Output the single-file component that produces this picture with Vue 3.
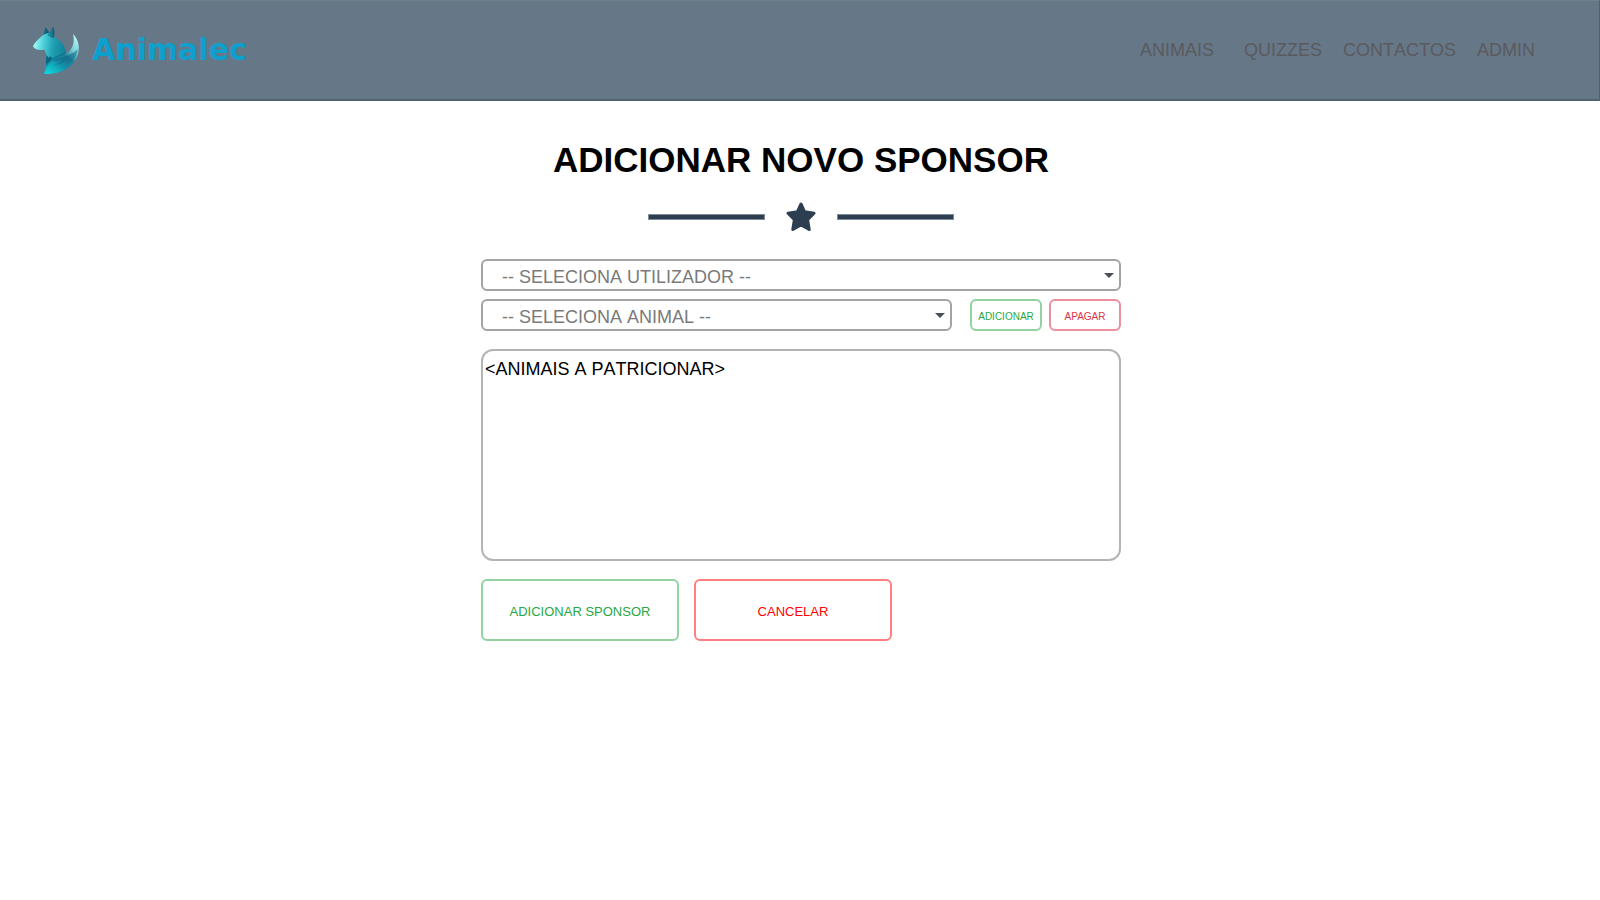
<script setup>
import { ref } from 'vue'

const links = ['Animais', 'Quizzes', 'Contactos', 'Admin']
const user = ref('')
const animal = ref('')
const sponsored = ref('<ANIMAIS A PATRICIONAR>')
</script>

<template>
  <div class="page">
    <header class="topbar">
      <a class="brand" href="#">
        <svg class="fox" viewBox="0 0 195 195" aria-hidden="true">
          <defs>
            <linearGradient id="head" x1="0" y1="0.5" x2="1" y2="0.6">
              <stop offset="0" stop-color="#a5fbf5" />
              <stop offset="0.28" stop-color="#4fd3dc" />
              <stop offset="0.6" stop-color="#1f9fb2" />
              <stop offset="1" stop-color="#0f7f98" />
            </linearGradient>
            <linearGradient id="ear" x1="0" y1="0.5" x2="1" y2="0.5">
              <stop offset="0" stop-color="#2aa0b2" />
              <stop offset="0.5" stop-color="#1a8199" />
              <stop offset="1" stop-color="#0f5674" />
            </linearGradient>
            <linearGradient id="body" x1="0.2" y1="1" x2="0.5" y2="0">
              <stop offset="0" stop-color="#0fc6d0" />
              <stop offset="0.5" stop-color="#118ba3" />
              <stop offset="1" stop-color="#0f7590" />
            </linearGradient>
            <linearGradient id="tail" x1="0.9" y1="0" x2="0.2" y2="1">
              <stop offset="0" stop-color="#b9fff9" />
              <stop offset="0.3" stop-color="#7ccfd8" />
              <stop offset="0.5" stop-color="#1d7f9a" />
              <stop offset="0.7" stop-color="#148fa8" />
              <stop offset="1" stop-color="#0fd0d6" />
            </linearGradient>
          </defs>
          <path fill="#135f7c" d="M55 53C57 44 60 36 62 27L72 42L66 54Z" />
          <path fill="url(#head)" d="M24 85C30 72 44 60 54 52C62 47 70 44 76 46L87 57C105 64 120 80 123 105L117 118C101 116 85 122 70 136C62 130 63 119 65 112C62 105 61 98 58 95C46 97 30 97 24 85Z" />
          <path fill="url(#ear)" d="M84 25C89 35 90 47 86 59C80 60 71 56 66 49C74 43 81 36 84 25Z" />
          <path fill="url(#body)" d="M65 112L72 121L75 115L81 121C95 111 110 110 123 103L117 135L100 160C86 168 70 168 57 168C61 155 62 145 63 136Z" />
          <path fill="#10607d" d="M65 112L72 121L75 115L81 121C76 127 70 132 64 142L63 132Z" />
          <path fill="url(#tail)" d="M144 48C157 61 165 80 160 104C154 132 132 152 104 162C91 167 73 168 57 168C64 160 66 148 72 139C84 124 110 114 126 105C140 95 151 78 144 48Z" />
          <path fill="#116785" opacity="0.55" d="M83 129C108 115 140 115 158 94C156 118 140 134 116 142C128 134 130 130 134 126C115 136 100 138 88 141C100 135 108 131 114 126C102 129 92 130 83 129Z" />
        </svg>
        <span class="wordmark">Animalec</span>
      </a>
      <nav class="menu" aria-label="Principal">
        <a v-for="link in links" :key="link" href="#">{{ link }}</a>
      </nav>
    </header>

    <main class="content">
      <h1>ADICIONAR NOVO SPONSOR</h1>
      <div class="divider" aria-hidden="true">
        <span class="rule"></span>
        <svg class="star" viewBox="0 0 30 30">
          <path fill="#2c3e50" stroke="#2c3e50" stroke-width="3" stroke-linejoin="round" d="M15 2L18.6 9.8L28 11.2L21.6 17.6L23.2 27.5L15 23L6.8 27.5L8.4 17.6L2 11.2L11.4 9.8Z" />
        </svg>
        <span class="rule"></span>
      </div>

      <form class="form" @submit.prevent>
        <div class="select">
          <select v-model="user" aria-label="Utilizador">
            <option value="">-- SELECIONA UTILIZADOR --</option>
          </select>
          <svg class="caret" viewBox="0 0 10 5" aria-hidden="true"><path fill="#495057" d="M0 0H10L5 5Z" /></svg>
        </div>
        <div class="row">
          <div class="select">
            <select v-model="animal" aria-label="Animal">
              <option value="">-- SELECIONA ANIMAL --</option>
            </select>
            <svg class="caret" viewBox="0 0 10 5" aria-hidden="true"><path fill="#495057" d="M0 0H10L5 5Z" /></svg>
          </div>
          <div class="tools">
            <button type="button" class="small add">ADICIONAR</button>
            <button type="button" class="small remove">APAGAR</button>
          </div>
        </div>
        <textarea v-model="sponsored" aria-label="Animais a patrocinar"></textarea>
        <div class="actions">
          <button type="submit" class="large add">ADICIONAR SPONSOR</button>
          <button type="button" class="large cancel">CANCELAR</button>
        </div>
      </form>
    </main>
  </div>
</template>

<style>
body {
  background: #fff;
}
</style>

<style scoped>
.page,
.page button,
.page select,
.page textarea {
  font-family: "Liberation Sans", Arial, sans-serif;
}

.page * {
  box-sizing: border-box;
}

.topbar {
  display: flex;
  align-items: center;
  justify-content: space-between;
  height: 101px;
  padding: 0 64px 0 25px;
  background: #667788;
  border-top: 1px solid #6b8088;
  border-right: 1px solid #4f6073;
  border-bottom: 2px solid #526275;
}

.brand {
  display: flex;
  align-items: center;
  gap: 2px;
  text-decoration: none;
}

.fox {
  width: 65px;
  height: 65px;
}

.wordmark {
  color: #0f9fcd;
  font: bold 30px/36px "DejaVu Sans", sans-serif;
}

.menu {
  display: flex;
  gap: 21px;
  font-kerning: none;
}

.menu a {
  color: #5a5a5e;
  font-size: 18px;
  line-height: 24px;
  text-decoration: none;
  text-transform: uppercase;
}

.menu a:first-child {
  margin-right: 9px;
}

.content {
  display: flex;
  flex-direction: column;
  align-items: center;
  padding: 37px 0 40px 2px;
}

h1 {
  margin: 0;
  color: #000;
  font-size: 35px;
  line-height: 44px;
}

.divider {
  display: flex;
  align-items: center;
  gap: 21px;
  margin: 20px 0 27px;
}

.rule {
  width: 117px;
  height: 6px;
  background: #2c3e50;
  border: 1px solid #7f8b97;
}

.star {
  width: 30px;
  height: 30px;
}

.form {
  width: 640px;
  max-width: 100%;
}

.select {
  position: relative;
  flex: 1;
}

select {
  display: block;
  width: 100%;
  height: 32px;
  padding: 4px 20px 0 19px;
  appearance: none;
  color: #7a7a7a;
  background: #fff;
  border: 2px solid #a3a3a3;
  border-radius: 6px;
  font-size: 18px;
  font-kerning: none;
}

.caret {
  position: absolute;
  top: 14px;
  right: 7px;
  width: 10px;
  height: 5px;
  pointer-events: none;
}

.row {
  display: flex;
  gap: 18px;
  margin-top: 8px;
}

.tools {
  display: flex;
  gap: 7px;
}

button {
  padding: 2px 0 0;
  background: #fff;
  border: 2px solid;
  border-radius: 6px;
}

.small {
  width: 72px;
  height: 32px;
  font-size: 10px;
}

.large {
  width: 198px;
  height: 62px;
  font-size: 13px;
}

.add {
  color: #28a745;
  border-color: #93d3a2;
}

.remove {
  color: #dc3545;
  border-color: #ee8f9f;
}

.cancel {
  color: #ff0000;
  border-color: #ff7f7f;
}

textarea {
  display: block;
  width: 100%;
  height: 212px;
  margin: 18px 0;
  padding: 7px 2px;
  resize: none;
  color: #000;
  background: #fff;
  border: 2px solid #b4b4b4;
  border-radius: 12px;
  font-size: 18px;
  line-height: 22px;
  font-kerning: none;
}

.actions {
  display: flex;
  gap: 15px;
}
</style>
